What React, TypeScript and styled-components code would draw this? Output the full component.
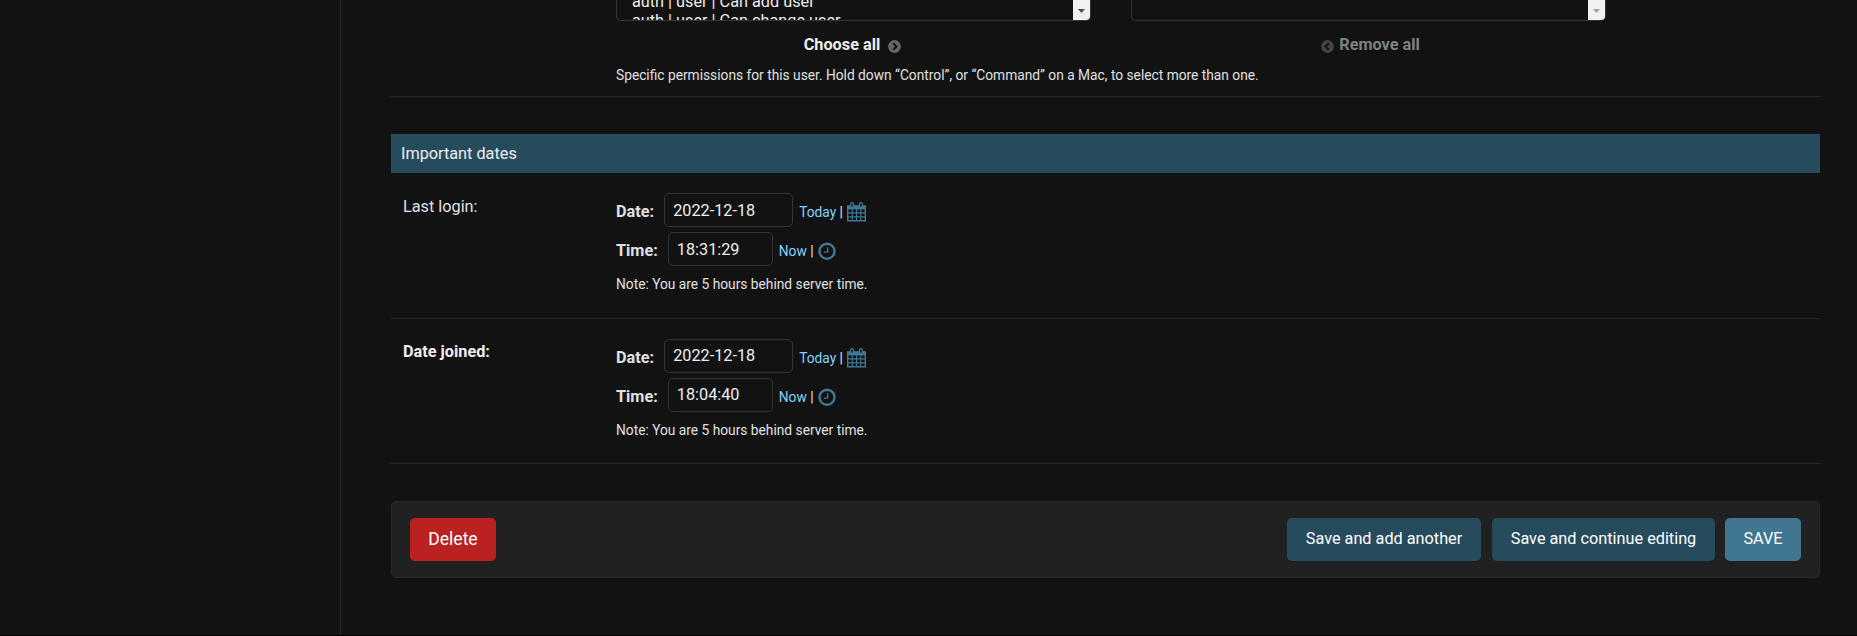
import React from 'react';
import styled, { createGlobalStyle } from 'styled-components';

const GlobalStyle = createGlobalStyle`
  * { box-sizing: border-box; }
  body { margin: 0; background: #121212; color: #eee; overflow: hidden; }
  body, input, button { font-family: Roboto, "Liberation Sans", sans-serif; }
`;

const Page = styled.div`
  display: flex;
  height: 636px;
  overflow: hidden;
  border-bottom: 1px solid #050005;
`;

const Sidebar = styled.aside`
  flex: none;
  width: 341px;
  border-right: 1px solid #282828;
`;

const Content = styled.main`
  flex: 1;
  min-width: 0;
  padding: 0 37px 0 50px;
`;

const PermissionsRow = styled.section`
  height: 97px;
  padding-left: 225px;
  border-bottom: 1px solid #282828;
`;

const Selector = styled.div`
  display: flex;
  gap: 40px;
`;

const SelectorColumn = styled.div`
  width: 475px;
`;

const OptionList = styled.div`
  display: flex;
  justify-content: space-between;
  height: 21px;
  overflow: hidden;
  border: 1px solid #353535;
  border-top: 0;
  border-radius: 0 0 5px 5px;
`;

const Options = styled.div`
  margin-top: -8px;
  padding-left: 15px;
  font-size: 16.25px;
  line-height: 19px;
  white-space: nowrap;
`;

const ScrollTrack = styled.div`
  display: flex;
  align-items: center;
  justify-content: center;
  width: 17px;
  height: 20px;
  padding-top: 2px;
  background: #f1f1f1;
`;

const BulkAction = styled.a<{ $muted?: boolean }>`
  display: flex;
  align-items: center;
  justify-content: center;
  gap: ${p => (p.$muted ? 5 : 8)}px;
  height: 20px;
  margin-top: 14px;
  padding: ${p => (p.$muted ? '0 0 0 4px' : '0 2px 0 0')};
  font-size: 16.25px;
  font-weight: 700;
  line-height: 20px;
  color: ${p => (p.$muted ? '#808080' : '#eee')};
  svg { margin-top: 3px; opacity: ${p => (p.$muted ? 0.6 : 1)}; }
`;

const Help = styled.p<{ $top: number }>`
  margin: ${p => p.$top}px 0 0;
  font-size: 13.75px;
  line-height: 18px;
  color: #e0e0e0;
`;

const SectionTitle = styled.h2`
  height: 39px;
  margin: 37px 0 0;
  padding-left: 10px;
  background: #264b5d;
  color: #eee;
  font-size: 16.25px;
  font-weight: 400;
  line-height: 39px;
`;

const FormRow = styled.section<{ $height: number }>`
  display: flex;
  height: ${p => p.$height}px;
  padding: 20px 0 0 12px;
  border-bottom: 1px solid #282828;
`;

const RowLabel = styled.label<{ $required?: boolean }>`
  width: 213px;
  padding-top: ${p => (p.$required ? 3 : 4)}px;
  font-size: 16.25px;
  line-height: 19px;
  font-weight: ${p => (p.$required ? 700 : 400)};
  color: ${p => (p.$required ? '#eee' : '#e0e0e0')};
`;

const Field = styled.div`
  display: flex;
  align-items: center;
  height: 34px;
  margin-bottom: 5px;
`;

const FieldLabel = styled.span`
  margin-right: 10px;
  padding-top: 2px;
  font-size: 16.25px;
  font-weight: 700;
  color: #e0e0e0;
`;

const Input = styled.input<{ $width: number; $raised?: boolean }>`
  width: ${p => p.$width}px;
  height: 34px;
  margin: 0 6px 0 0;
  padding: 0 8px ${p => (p.$raised ? 2 : 0)}px;
  border: 1px solid #353535;
  border-radius: 5px;
  background: #121212;
  color: #eee;
  font-size: 16.25px;
  outline: 0;
`;

const Shortcut = styled.span`
  display: flex;
  align-items: center;
  padding-top: 3px;
  font-size: 13.75px;
  white-space: pre;
  a { color: #81d4fa; }
  svg { margin-left: 4px; }
`;

const Actions = styled.footer`
  display: flex;
  align-items: center;
  gap: 11px;
  height: 77px;
  margin-top: 37px;
  padding: 0 18px;
  border: 1px solid #282828;
  border-radius: 5px;
  background: #212121;
`;

const Button = styled.button<{ $width: number; $tone: string; $size?: number }>`
  width: ${p => p.$width}px;
  height: 43px;
  padding: 0 0 2px;
  border: 0;
  border-radius: 5px;
  background: ${p => p.$tone};
  color: #fff;
  font-size: ${p => p.$size ?? 16.25}px;
  white-space: nowrap;
  &:last-child { margin-left: -1px; }
`;

const Spacer = styled.div`
  flex: 1;
`;

const Arrow = ({ color }: { color: string }) => (
  <svg width="7" height="4" viewBox="0 0 7 4"><path d="M0 0h7L3.5 4z" fill={color} /></svg>
);

const CircleChevron = ({ left }: { left?: boolean }) => (
  <svg width="13" height="13" viewBox="0 0 13 13">
    <circle cx="6.5" cy="6.5" r="6.4" fill="#666" />
    <path d={left ? 'M7.8 3.2 4.5 6.5l3.3 3.3' : 'M5.2 3.2l3.3 3.3-3.3 3.3'} fill="none" stroke="#121212" strokeWidth="2" />
  </svg>
);

const CalendarIcon = () => (
  <svg width="19" height="20" viewBox="0 0 19 20" fill="none" stroke="#417893">
    <path d="M.7 4.2h17.6v14.6H.7z" strokeWidth="1.4" />
    <path d="M0 3.4h19v4H0z" fill="#417893" stroke="none" />
    <path d="M1 10.9h17M1 14.9h17M5.2 7v12M9.5 7v12M13.8 7v12" strokeWidth="1.1" />
    <rect x="3.7" y=".7" width="2.8" height="4.6" rx="1.4" fill="#121212" strokeWidth="1.3" />
    <rect x="12.5" y=".7" width="2.8" height="4.6" rx="1.4" fill="#121212" strokeWidth="1.3" />
  </svg>
);

const ClockIcon = () => (
  <svg width="18" height="19" viewBox="0 0 18 19" fill="none" stroke="#417893">
    <circle cx="9" cy="10.2" r="7.5" strokeWidth="2.4" />
    <path d="M9.7 6.2v5H5.8" strokeWidth="1.3" />
  </svg>
);

interface DateTimeProps {
  label: string;
  date: string;
  time: string;
  height: number;
  required?: boolean;
}

const DateTimeRow = ({ label, date, time, height, required }: DateTimeProps) => (
  <FormRow $height={height}>
    <RowLabel $required={required}>{label}</RowLabel>
    <div>
      <Field>
        <FieldLabel>Date:</FieldLabel>
        <Input $width={129} $raised={required} defaultValue={date} />
        <Shortcut><a>Today</a> |<CalendarIcon /></Shortcut>
      </Field>
      <Field>
        <FieldLabel>Time:</FieldLabel>
        <Input $width={105} $raised={required} defaultValue={time} />
        <Shortcut><a>Now</a> |<ClockIcon /></Shortcut>
      </Field>
      <Help $top={9}>Note: You are 5 hours behind server time.</Help>
    </div>
  </FormRow>
);

export default function App() {
  return (
    <>
      <GlobalStyle />
      <Page>
        <Sidebar />
        <Content>
          <PermissionsRow>
            <Selector>
              <SelectorColumn>
                <OptionList>
                  <Options>
                    <div>auth | user | Can add user</div>
                    <div>auth | user | Can change user</div>
                  </Options>
                  <ScrollTrack><Arrow color="#505050" /></ScrollTrack>
                </OptionList>
                <BulkAction>Choose all <CircleChevron /></BulkAction>
              </SelectorColumn>
              <SelectorColumn>
                <OptionList>
                  <Options />
                  <ScrollTrack><Arrow color="#a3a3a3" /></ScrollTrack>
                </OptionList>
                <BulkAction $muted><CircleChevron left /> Remove all</BulkAction>
              </SelectorColumn>
            </Selector>
            <Help $top={11}>
              Specific permissions for this user. Hold down “Control”, or “Command” on a Mac, to select more than one.
            </Help>
          </PermissionsRow>
          <SectionTitle>Important dates</SectionTitle>
          <DateTimeRow label="Last login:" date="2022-12-18" time="18:31:29" height={146} />
          <DateTimeRow label="Date joined:" date="2022-12-18" time="18:04:40" height={145} required />
          <Actions>
            <Button $width={86} $tone="#ba2121" $size={17.5}>Delete</Button>
            <Spacer />
            <Button $width={194} $tone="#264b5d">Save and add another</Button>
            <Button $width={223} $tone="#264b5d">Save and continue editing</Button>
            <Button $width={76} $tone="#417690">SAVE</Button>
          </Actions>
        </Content>
      </Page>
    </>
  );
}
